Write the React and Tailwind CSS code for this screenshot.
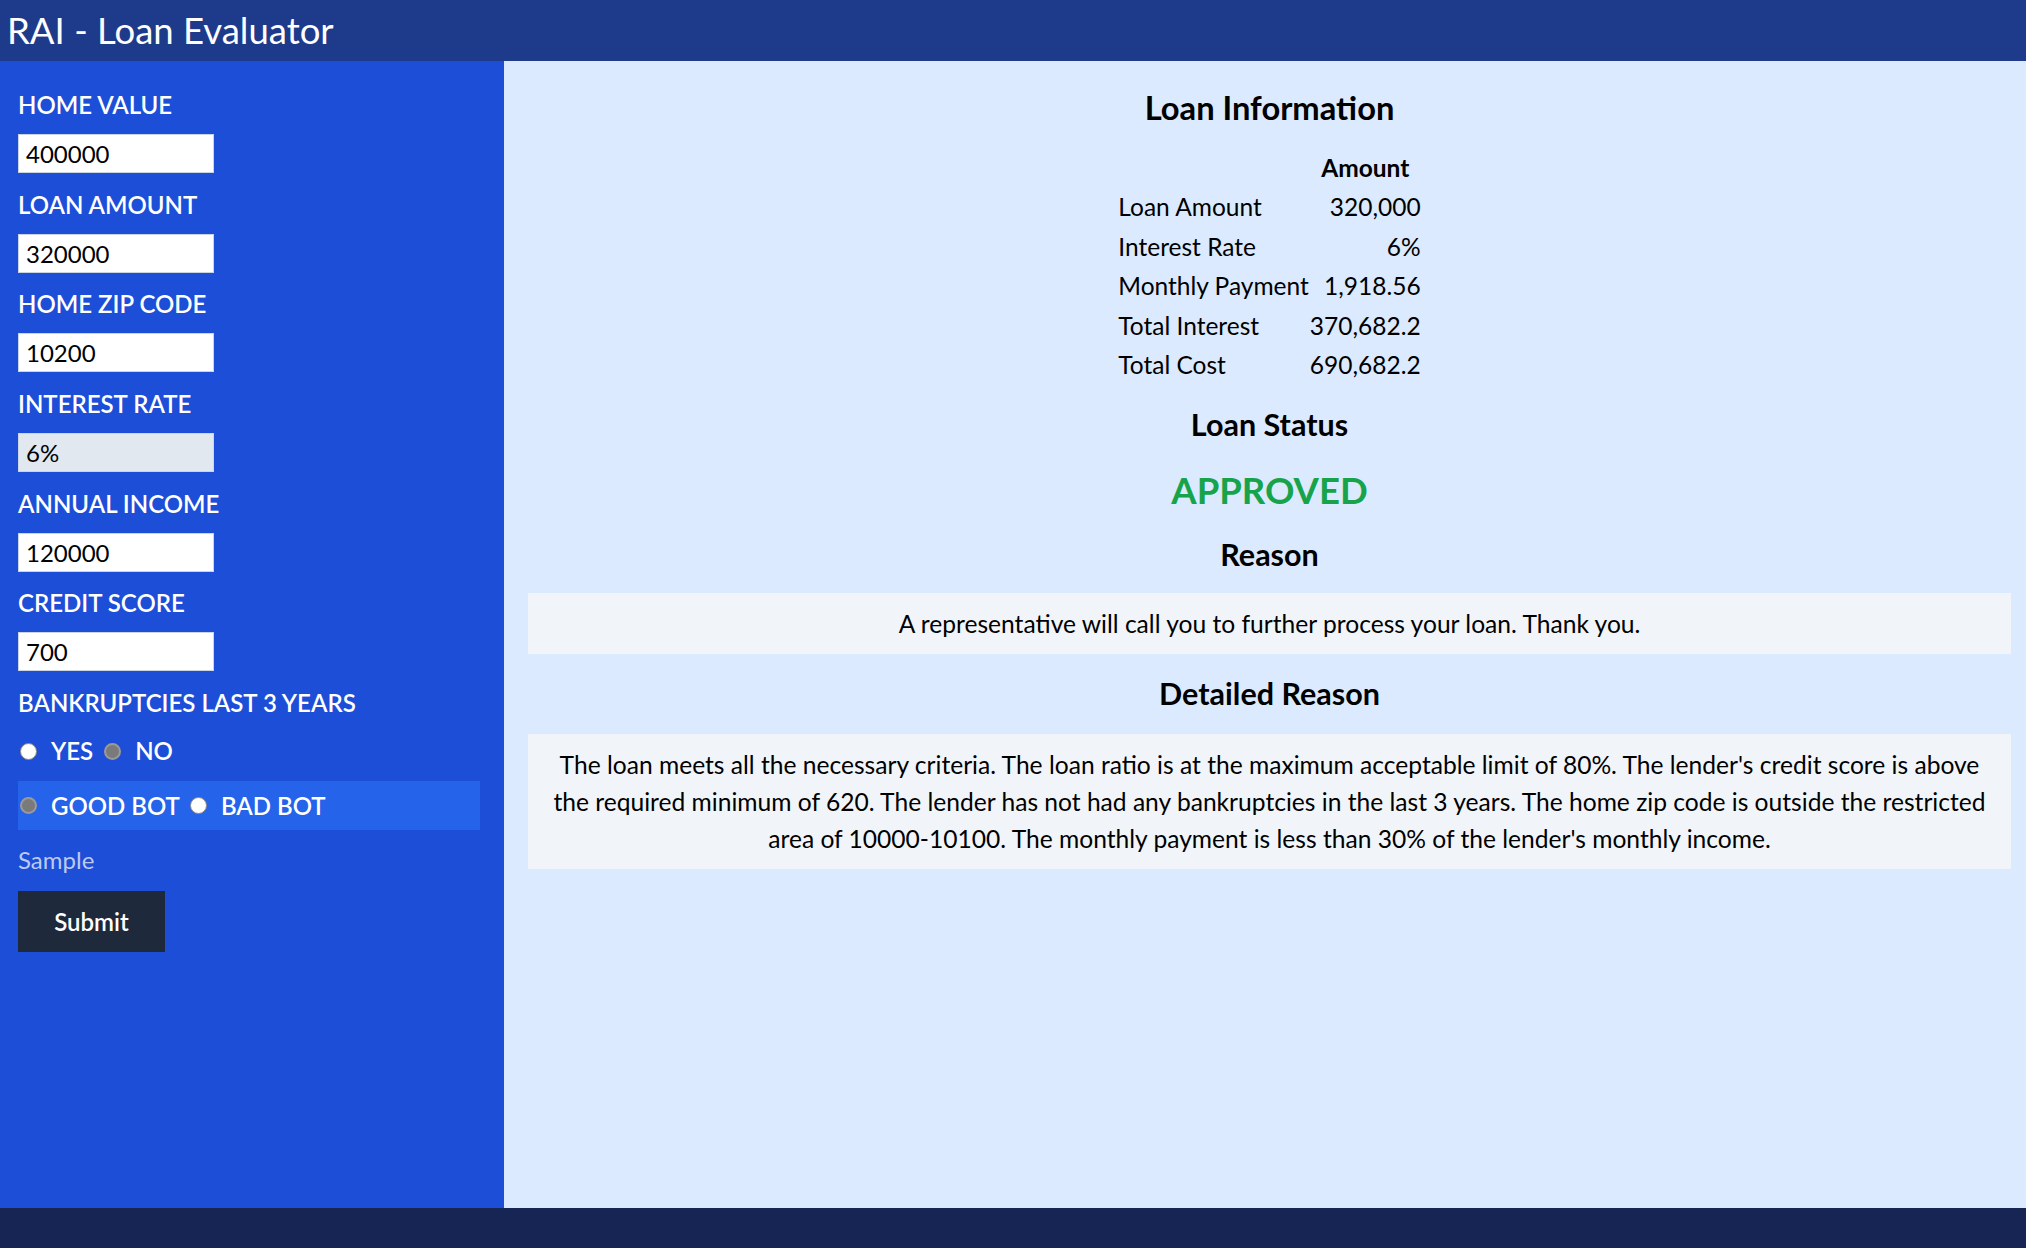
import { useState } from 'react';

function Radio({ checked }) {
  return checked ? (
    <span className="inline-block w-[17px] h-[17px] rounded-full border-2 border-[#9a9a9a] bg-[#7a7a7a] shrink-0"></span>
  ) : (
    <span className="inline-block w-[17px] h-[17px] rounded-full border border-[#8a8a8a] bg-white shrink-0"></span>
  );
}

const fields = [
  { label: 'HOME VALUE', value: '400000' },
  { label: 'LOAN AMOUNT', value: '320000' },
  { label: 'HOME ZIP CODE', value: '10200' },
  { label: 'INTEREST RATE', value: '6%', disabled: true },
  { label: 'ANNUAL INCOME', value: '120000' },
  { label: 'CREDIT SCORE', value: '700' },
];

const rows = [
  ['Loan Amount', '320,000'],
  ['Interest Rate', '6%'],
  ['Monthly Payment', '1,918.56'],
  ['Total Interest', '370,682.2'],
  ['Total Cost', '690,682.2'],
];

export default function App() {
  const [bankrupt] = useState('no');
  const [bot] = useState('good');

  return (
    <div className="h-[1248px] flex flex-col font-['Lato','Open_Sans',sans-serif]">
      <header className="h-[61px] bg-[#1e3a8a] px-[7px] text-white text-[36.5px] leading-[61px] shrink-0">
        RAI - Loan Evaluator
      </header>

      <div className="flex flex-1 min-h-0">
        {/* Sidebar form */}
        <aside className="w-[504px] bg-[#1d4ed8] pl-[18px] pr-[24px] pt-[26px] shrink-0 text-white">
          {fields.map((f) => (
            <div key={f.label} className="mb-[13.7px]">
              <div className="text-[24px] leading-[36px] font-semibold">{f.label}</div>
              <input
                readOnly
                value={f.value}
                className={`mt-[11px] block w-[196px] h-[39px] border border-[#cbd5e1] px-[7px] text-[24px] text-black outline-none ${
                  f.disabled ? 'bg-[#e2e8f0]' : 'bg-white'
                }`}
              />
            </div>
          ))}

          <div className="text-[24px] leading-[36px] font-semibold">BANKRUPTCIES LAST 3 YEARS</div>
          <div className="mt-[12px] flex items-center h-[36px] text-[24px] font-semibold pl-[2px]">
            <Radio checked={bankrupt === 'yes'} />
            <span className="ml-[14px] mr-[11px]">YES</span>
            <Radio checked={bankrupt === 'no'} />
            <span className="ml-[14px]">NO</span>
          </div>

          <div className="mt-[12px] h-[49px] bg-[#2563eb] flex items-center pl-[2px] text-[24px] font-semibold">
            <Radio checked={bot === 'good'} />
            <span className="ml-[14px] mr-[10px]">GOOD BOT</span>
            <Radio checked={bot === 'bad'} />
            <span className="ml-[14px]">BAD BOT</span>
          </div>

          <div className="mt-[12px] text-[24px] leading-[36px] text-[#bccaf0]">Sample</div>

          <button className="mt-[13px] w-[147px] h-[61px] bg-[#1e293b] text-white text-[24px] font-semibold">
            Submit
          </button>
        </aside>

        {/* Results */}
        <main className="flex-1 bg-[#dbeafe] pl-[24px] pr-[15px] pt-[23px] text-black">
          <h2 className="text-center text-[32.7px] leading-[48px] font-bold">Loan Information</h2>

          <table className="mx-auto mt-[16px] text-[24.5px]">
            <thead>
              <tr className="leading-[39.4px]">
                <th></th>
                <th className="text-center font-bold">Amount</th>
              </tr>
            </thead>
            <tbody>
              {rows.map(([k, v]) => (
                <tr key={k} className="leading-[39.4px]">
                  <td className="pr-[1px]">{k}</td>
                  <td className="text-right">{v}</td>
                </tr>
              ))}
            </tbody>
          </table>

          <h3 className="mt-[18px] text-center text-[30.5px] leading-[45px] font-bold">Loan Status</h3>
          <div className="mt-[16px] text-center text-[36.5px] leading-[54px] font-bold text-[#16a34a]">APPROVED</div>

          <h3 className="mt-[15px] text-center text-[30.5px] leading-[45px] font-bold">Reason</h3>
          <div className="mt-[16px] bg-[#f1f5f9] py-[12px] px-[24px] text-center text-[24.6px] leading-[37px]">
            A representative will call you to further process your loan. Thank you.
          </div>

          <h3 className="mt-[17px] text-center text-[30.5px] leading-[45px] font-bold">Detailed Reason</h3>
          <div className="mt-[18px] bg-[#f1f5f9] py-[12px] px-[16px] text-center text-[24.6px] leading-[37px]">
            The loan meets all the necessary criteria. The loan ratio is at the maximum acceptable limit of 80%. The lender's credit score is above
            <br />
            the required minimum of 620. The lender has not had any bankruptcies in the last 3 years. The home zip code is outside the restricted
            <br />
            area of 10000-10100. The monthly payment is less than 30% of the lender's monthly income.
          </div>
        </main>
      </div>

      <footer className="h-[40px] bg-[#172554] shrink-0"></footer>
    </div>
  );
}
